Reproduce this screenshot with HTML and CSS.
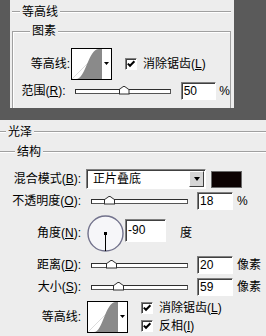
FILE: index.html
```html
<!DOCTYPE html>
<html lang="zh-CN">
<head>
    <meta charset="UTF-8">
    <title>图层样式</title>
    <link rel="stylesheet" href="styles.css">
</head>
<body>
    <div class="panel panel-top">
        <div class="rule-title rule-contour"><span>等高线</span></div>
        <div class="box">
            <span class="box-title">图素</span>
            <div class="row row-curve-top">
                <span class="lbl lbl-curve-top">等高线:</span>
                <div class="curve">
                    <svg width="39" height="30" viewBox="0 0 39 30">
                        <rect width="39" height="30" fill="#fff"/>
                        <line x1="0" y1="30" x2="30" y2="0" stroke="#dcdcdc" stroke-width="1"/>
                        <path d="M4,30 C14,30 16,0 27,0 L30,0 L30,30 Z" fill="#8a8a8a"/>
                        <polygon points="32,13 37,13 34.5,16" fill="#000"/>
                    </svg>
                </div>
                <span class="check check-top"><span class="tick"><svg width="10" height="10" viewBox="0 0 10 10"><polyline points="1.8,4.6 4,6.8 8.4,2.2" fill="none" stroke="#000" stroke-width="2"/></svg></span><span>消除锯齿(<u>L</u>)</span></span>
            </div>
            <div class="row row-range">
                <span class="lbl lbl-range">范围(<u>R</u>):</span>
                <div class="slider slider-top"><span class="thumb" style="left: 43px"></span></div>
                <div class="field field-top">50</div>
                <span class="unit unit-top">%</span>
            </div>
        </div>
    </div>

    <div class="panel panel-bottom">
        <div class="rule-title rule-gloss"><span>光泽</span></div>
        <div class="rule-title rule-struct"><span>结构</span></div>

        <div class="row row-blend">
            <span class="lbl">混合模式(<u>B</u>):</span>
            <div class="select">
                <span class="select-text">正片叠底</span>
                <span class="select-btn"></span>
            </div>
            <span class="swatch"></span>
        </div>

        <div class="row row-opacity">
            <span class="lbl">不透明度(<u>O</u>):</span>
            <div class="slider"><span class="thumb" style="left: 12px"></span></div>
            <div class="field">18</div>
            <span class="unit">%</span>
        </div>

        <div class="row row-angle">
            <span class="lbl">角度(<u>N</u>):</span>
            <svg class="dial" width="37" height="37" viewBox="0 0 37 37">
                <circle cx="18.5" cy="18.5" r="17.5" fill="#f6f6f9" stroke="#72728c" stroke-width="1.4"/>
                <line x1="18.5" y1="18.5" x2="18.5" y2="36" stroke="#000" stroke-width="1"/>
                <rect x="17" y="17" width="3" height="3" fill="#000"/>
            </svg>
            <div class="field field-angle">-90</div>
            <span class="unit unit-angle">度</span>
        </div>

        <div class="row row-distance">
            <span class="lbl">距离(<u>D</u>):</span>
            <div class="slider"><span class="thumb" style="left: 14px"></span></div>
            <div class="field">20</div>
            <span class="unit">像素</span>
        </div>

        <div class="row row-size">
            <span class="lbl">大小(<u>S</u>):</span>
            <div class="slider"><span class="thumb" style="left: 21px"></span></div>
            <div class="field">59</div>
            <span class="unit">像素</span>
        </div>

        <div class="row row-curve">
            <span class="lbl">等高线:</span>
            <div class="curve curve-bottom">
                <svg width="39" height="30" viewBox="0 0 39 30">
                    <rect width="39" height="30" fill="#fff"/>
                    <line x1="0" y1="30" x2="30" y2="0" stroke="#dcdcdc" stroke-width="1"/>
                    <path d="M6,30 C15,30 17,0 28,0 L30,0 L30,30 Z" fill="#8a8a8a"/>
                    <polygon points="32,13 37,13 34.5,16" fill="#000"/>
                </svg>
            </div>
            <div class="checks">
                <span class="check"><span class="tick"><svg width="10" height="10" viewBox="0 0 10 10"><polyline points="1.8,4.6 4,6.8 8.4,2.2" fill="none" stroke="#000" stroke-width="2"/></svg></span><span>消除锯齿(<u>L</u>)</span></span>
                <span class="check"><span class="tick"><svg width="10" height="10" viewBox="0 0 10 10"><polyline points="1.8,4.6 4,6.8 8.4,2.2" fill="none" stroke="#000" stroke-width="2"/></svg></span><span>反相(<u>I</u>)</span></span>
            </div>
        </div>
    </div>
</body>
</html>
```

FILE: styles.css
```css
* {
    box-sizing: border-box;
}

body {
    margin: 0;
    width: 266px;
    height: 336px;
    overflow: hidden;
    background: #5a5a5a;
    color: #000;
    font-family: "Liberation Sans", "Noto Sans CJK SC", sans-serif;
    font-size: 12px;
    line-height: 14px;
}

u {
    text-decoration: underline;
    text-underline-offset: 1px;
}

.panel {
    background: #ededed;
    overflow: hidden;
}

.panel-top {
    margin-left: 10px;
    width: 224px;
    height: 108px;
}

.panel-bottom {
    margin-top: 12px;
    height: 216px;
}

/* group titles with an etched rule */
.rule-title {
    display: flex;
    align-items: center;
    gap: 2px;
}

.rule-title::before,
.rule-title::after {
    content: "";
    border-top: 1px solid #a0a0a0;
    border-bottom: 1px solid #fff;
}

.rule-title::after {
    flex: 1;
}

.rule-contour {
    height: 24px;
    padding: 0 3px 0 2px;
}

.rule-contour::before {
    width: 8px;
}

.rule-gloss {
    height: 24px;
}

.rule-gloss::before {
    width: 6px;
}

.rule-struct {
    height: 16px;
}

.rule-struct::before {
    width: 15px;
}

/* boxed group */
.box {
    position: relative;
    margin: 7px 3px 0 2px;
    height: 100px;
    border: 1px solid #a0a0a0;
    box-shadow: inset 1px 1px #fff;
}

.box-title {
    position: absolute;
    top: -8px;
    left: 17px;
    padding: 0 2px;
    background: #ededed;
}

/* rows */
.row {
    display: flex;
    align-items: center;
}

.lbl {
    width: 81px;
    text-align: right;
    white-space: nowrap;
}

.row-curve-top {
    margin-top: 16px;
    height: 32px;
}

.lbl-curve-top {
    width: 57px;
}

.row-range {
    margin-top: 2px;
    height: 18px;
}

.lbl-range {
    width: 53px;
}

.row-blend {
    margin-top: 8px;
    height: 22px;
}

.row-opacity {
    margin-top: 2px;
    height: 18px;
}

.row-angle {
    margin-top: 5px;
    height: 36px;
}

.row-distance {
    margin-top: 5px;
    height: 18px;
}

.row-size {
    margin-top: 4px;
    height: 18px;
}

.row-curve {
    margin-top: 5px;
    height: 32px;
}

/* contour preview */
.curve {
    width: 41px;
    height: 32px;
    margin-left: 1px;
    border: 1px solid #000;
}

.curve svg {
    display: block;
}

.curve-bottom {
    margin-left: 6px;
}

/* checkboxes */
.check {
    display: flex;
    align-items: center;
    gap: 6px;
    white-space: nowrap;
}

.check-top {
    margin-left: 13px;
}

.tick {
    width: 12px;
    height: 12px;
    border: 1px solid;
    border-color: #808080 #fff #fff #808080;
    box-shadow: inset 1px 1px #404040;
    background: #fff;
    display: flex;
    align-items: center;
    justify-content: center;
}

.tick svg {
    display: block;
}

.checks {
    margin-left: 13px;
    display: flex;
    flex-direction: column;
    gap: 4px;
}

/* sliders */
.slider {
    position: relative;
    width: 97px;
    height: 5px;
    margin-left: 10px;
    background: #fff;
    border: 1px solid #2e2e2e;
    border-right-color: #555;
    border-bottom-color: #555;
}

.slider-top {
    margin-left: 9px;
}

.thumb {
    position: absolute;
    bottom: -2px;
    width: 11px;
    height: 9px;
    background: #2e2e2e;
    clip-path: polygon(0 100%, 0 45%, 50% 0, 100% 45%, 100% 100%);
}

.thumb::after {
    content: "";
    position: absolute;
    inset: 1px;
    background: #fff;
    clip-path: polygon(0 100%, 0 45%, 50% 0, 100% 45%, 100% 100%);
}

/* text fields */
.field {
    width: 36px;
    height: 18px;
    margin-left: 9px;
    padding-left: 2px;
    line-height: 16px;
    background: #fff;
    border: 1px solid;
    border-color: #808080 #fff #fff #808080;
    box-shadow: inset 1px 1px #404040;
}

.field-top {
    margin-left: 10px;
}

.field-angle {
    width: 41px;
    height: 23px;
    margin-left: 1px;
    line-height: 21px;
    align-self: flex-start;
    margin-top: 4px;
}

.unit {
    margin-left: 4px;
    white-space: nowrap;
}

.unit-top {
    margin-left: 3px;
}

.unit-angle {
    margin-left: 14px;
}

/* angle dial */
.dial {
    display: block;
    margin-left: 6px;
}

/* blend mode dropdown */
.select {
    display: flex;
    width: 120px;
    height: 20px;
    margin-left: 5px;
    background: #fff;
    border: 1px solid;
    border-color: #808080 #fff #fff #808080;
    box-shadow: inset 1px 1px #404040;
}

.select-text {
    flex: 1;
    padding-left: 6px;
    line-height: 18px;
}

.select-btn {
    width: 15px;
    margin: 1px 1px 1px 0;
    background: #d6d6d6;
    border: 1px solid;
    border-color: #fff #404040 #404040 #fff;
    display: flex;
    align-items: center;
    justify-content: center;
}

.select-btn::after {
    content: "";
    border-left: 3.5px solid transparent;
    border-right: 3.5px solid transparent;
    border-top: 4px solid #000;
}

.swatch {
    width: 31px;
    height: 17px;
    margin-left: 5px;
    background: #0c0202;
    border: 1px solid #6a6a6a;
}
```
